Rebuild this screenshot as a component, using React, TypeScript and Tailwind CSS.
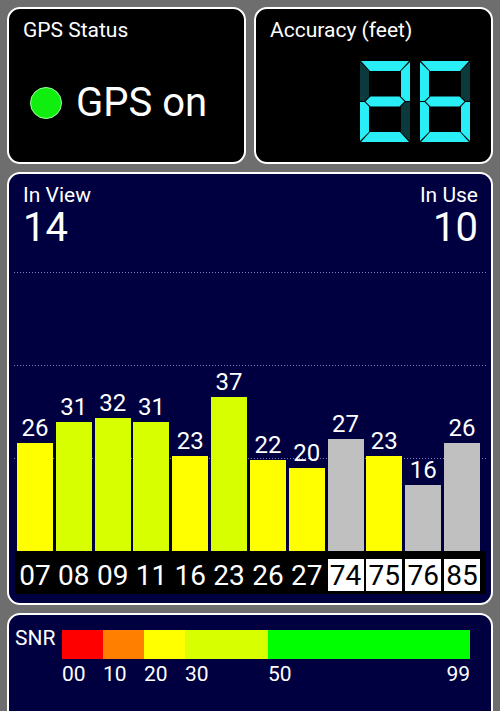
import React from 'react';

type Sat = { prn: string; snr: number; inUse: boolean; glonass: boolean };

const sats: Sat[] = [
  { prn: '07', snr: 26, inUse: true, glonass: false },
  { prn: '08', snr: 31, inUse: true, glonass: false },
  { prn: '09', snr: 32, inUse: true, glonass: false },
  { prn: '11', snr: 31, inUse: true, glonass: false },
  { prn: '16', snr: 23, inUse: true, glonass: false },
  { prn: '23', snr: 37, inUse: true, glonass: false },
  { prn: '26', snr: 22, inUse: true, glonass: false },
  { prn: '27', snr: 20, inUse: true, glonass: false },
  { prn: '74', snr: 27, inUse: false, glonass: true },
  { prn: '75', snr: 23, inUse: true, glonass: true },
  { prn: '76', snr: 16, inUse: false, glonass: true },
  { prn: '85', snr: 26, inUse: false, glonass: true },
];

const PX_PER_SNR = 4.15;

const barColor = (sat: Sat) => {
  if (!sat.inUse) return 'bg-[#c0c0c0]';
  if (sat.snr >= 50) return 'bg-[#00ff00]';
  if (sat.snr >= 30) return 'bg-[#d8ff00]';
  if (sat.snr >= 20) return 'bg-[#ffff00]';
  if (sat.snr >= 10) return 'bg-[#ff8000]';
  return 'bg-[#ff0000]';
};

// seven segment digit, viewBox 50x81
const SEGMENTS: Record<string, string> = {
  a: '1,0 49,0 40,10 10,10',
  b: '50,1 50,40 45.5,40 41,35.5 41,10',
  c: '50,41 50,80 41,71 41,45.5 45.5,41',
  d: '1,81 49,81 40,71 10,71',
  e: '0,41 4.5,41 9,45.5 9,71 0,80',
  f: '0,1 9,10 9,35.5 4.5,40 0,40',
  g: '5.5,40.5 10.5,35.5 39.5,35.5 44.5,40.5 39.5,45.5 10.5,45.5',
};

const DIGIT_SEGS: Record<string, string> = {
  '0': 'abcdef',
  '1': 'bc',
  '2': 'abged',
  '3': 'abgcd',
  '4': 'fgbc',
  '5': 'afgcd',
  '6': 'afgedc',
  '7': 'abc',
  '8': 'abcdefg',
  '9': 'abcdfg',
};

const SegDigit: React.FC<{ digit: string }> = ({ digit }) => {
  const lit = DIGIT_SEGS[digit] || '';
  return (
    <svg width="50" height="81" viewBox="0 0 50 81">
      {Object.entries(SEGMENTS).map(([key, pts]) => (
        <polygon
          key={key}
          points={pts}
          fill={lit.includes(key) ? '#2aeef6' : '#0c3a3c'}
        />
      ))}
    </svg>
  );
};

const snrScale = [
  { label: '00', width: 41, color: 'bg-[#ff0000]' },
  { label: '10', width: 41, color: 'bg-[#ff8000]' },
  { label: '20', width: 41, color: 'bg-[#ffff00]' },
  { label: '30', width: 83, color: 'bg-[#d8ff00]' },
  { label: '50', width: 202, color: 'bg-[#00ff00]' },
];

const DottedLine: React.FC<{ top: string }> = ({ top }) => (
  <div
    className={`absolute -left-[1px] -right-[1px] h-[1px] bg-[repeating-linear-gradient(90deg,#7c7cc4_0_1px,transparent_1px_3px)] ${top}`}
  />
);

export default function App() {
  const accuracy = '26';

  return (
    <div className="w-[500px] h-[711px] overflow-hidden bg-[#6e6e6e] px-[7px] pt-[7px] flex flex-col gap-[8px] font-[family-name:Roboto,sans-serif] text-white">
      {/* top row */}
      <div className="flex gap-[8px] h-[157px] shrink-0">
        <div className="w-[239px] shrink-0 rounded-[13px] border-2 border-white bg-black pl-[14px] pt-[9px]">
          <div className="text-[21px] leading-[25px]">GPS Status</div>
          <div className="mt-[40px] h-[40px] flex items-center">
            <div className="ml-[7px] w-[32px] h-[32px] rounded-full bg-[#10ee10] border border-[#9cff9c]" />
            <span className="ml-[14px] text-[40px] leading-[40px]">GPS on</span>
          </div>
        </div>
        <div className="w-[239px] shrink-0 rounded-[13px] border-2 border-white bg-black pl-[14px] pr-[21px] pt-[9px]">
          <div className="text-[21px] leading-[25px]">Accuracy (feet)</div>
          <div className="mt-[18px] flex justify-end gap-[10px]">
            {accuracy.split('').map((d, i) => (
              <SegDigit key={i} digit={d} />
            ))}
          </div>
        </div>
      </div>

      {/* satellites */}
      <div className="h-[433px] shrink-0 rounded-[13px] border-2 border-white bg-[#000040] pt-[9px]">
        <div className="flex justify-between pl-[14px] pr-[13px]">
          <div>
            <div className="text-[21px] leading-[25px]">In View</div>
            <div className="text-[40px] leading-[40px]">14</div>
          </div>
          <div className="text-right">
            <div className="text-[21px] leading-[25px]">In Use</div>
            <div className="text-[40px] leading-[40px]">10</div>
          </div>
        </div>

        <div className="ml-[6px] mr-[5px] mt-[24px]">
          <div className="relative h-[279px]">
            <DottedLine top="top-0" />
            <DottedLine top="top-[93px]" />
            <DottedLine top="top-[186px]" />
            <div className="relative h-full grid grid-cols-12 gap-x-[2.8px] pl-[2px] pr-[6px]">
              {sats.map(sat => (
                <div key={sat.prn} className="flex flex-col justify-end items-center">
                  <span className="text-[24px] leading-[28px] mb-[1px]">{sat.snr}</span>
                  <div
                    className={`w-full ${barColor(sat)}`}
                    style={{ height: Math.round(sat.snr * PX_PER_SNR) }}
                  />
                </div>
              ))}
            </div>
          </div>
          <div className="h-[43px] bg-black pt-[8px] grid grid-cols-12 gap-x-[2.8px] pl-[2px] pr-[6px]">
            {sats.map(sat => (
              <div
                key={sat.prn}
                className={`h-[32px] flex justify-center text-[28px] leading-[34px] ${
                  sat.glonass ? 'bg-white text-black' : 'text-white'
                }`}
              >
                {sat.prn}
              </div>
            ))}
          </div>
        </div>
      </div>

      {/* SNR legend */}
      <div className="h-[110px] shrink-0 rounded-[13px] border-2 border-white bg-[#000040] pt-[11px] pl-[6px] flex">
        <div className="w-[47px] text-[21px] leading-[25px]">SNR</div>
        <div className="mt-[4px]">
          <div className="flex h-[29px]">
            {snrScale.map(s => (
              <div key={s.label} className={s.color} style={{ width: s.width }} />
            ))}
          </div>
          <div className="flex mt-[3px] text-[21px] leading-[25px]">
            {snrScale.map((s, i) => (
              <div
                key={s.label}
                className="flex justify-between"
                style={{ width: s.width }}
              >
                <span>{s.label}</span>
                {i === snrScale.length - 1 && <span>99</span>}
              </div>
            ))}
          </div>
        </div>
      </div>
    </div>
  );
}
